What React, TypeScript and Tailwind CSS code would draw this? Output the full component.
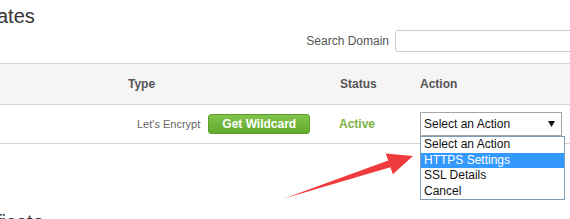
import React from "react";

const options = ["Select an Action", "HTTPS Settings", "SSL Details", "Cancel"];

const ActionSelect: React.FC = () => {
  return (
    <div className="relative w-[142px]">
      <div className="h-[24px] border border-[#a5a5a5] bg-white flex items-center justify-between pl-[3px] pr-[6px] text-[12px] text-[#111]">
        <span>Select an Action</span>
        <svg width="7" height="6" viewBox="0 0 7 6">
          <polygon points="0,0 7,0 3.5,6" fill="#111" />
        </svg>
      </div>
      {/* open option list */}
      <div className="absolute left-0 top-full w-[145px] border border-[#7f9db9] bg-white text-[12px] text-[#111]">
        {options.map((o, i) => (
          <div
            key={o}
            className={
              i === 1
                ? "h-[15.5px] leading-[15.5px] pl-[3px] bg-[#3399ff] text-white"
                : "h-[15.5px] leading-[15.5px] pl-[3px]"
            }
          >
            {o}
          </div>
        ))}
      </div>
    </div>
  );
};

export default function App() {
  return (
    <div className="relative w-[570px] h-[219px] overflow-hidden bg-white font-['Liberation_Sans',Arial,sans-serif] text-[#333]">
      <h2 className="text-[20px] leading-[24px] pt-[4px] -ml-[3px]">ates</h2>

      <div className="flex justify-end items-center mt-[2px] h-[22px]">
        <label className="text-[12px] text-[#555] mr-[6px]">Search Domain</label>
        <input className="w-[190px] h-[22px] border border-[#ccc] rounded-[3px] -mr-[15px] bg-white" />
      </div>

      <div className="mt-[11px]">
        <div className="grid grid-cols-[128px_212px_80px_1fr] items-center h-[42px] bg-[#f5f5f5] border-y border-[#d4d4d4] text-[12px] font-bold text-[#555]">
          <div />
          <div>Type</div>
          <div>Status</div>
          <div>Action</div>
        </div>
        <div className="grid grid-cols-[128px_212px_80px_1fr] items-center h-[39px] border-b border-[#d4d4d4]">
          <div />
          <div className="flex items-center pl-[9px] gap-[8px]">
            <span className="text-[11px] text-[#666]">Let's Encrypt</span>
            <button className="h-[20px] w-[102px] rounded-[3px] border border-[#5b9e2c] bg-gradient-to-b from-[#82c44b] to-[#62aa2f] text-white text-[12px] font-bold leading-none">
              Get Wildcard
            </button>
          </div>
          <div className="text-[12px] font-bold text-[#7cb342] -ml-[1px]">Active</div>
          <div>
            <ActionSelect />
          </div>
        </div>
      </div>

      <h2 className="text-[20px] leading-[24px] mt-[66px] -ml-[4px]">ficate</h2>

      {/* annotation arrow */}
      <svg className="absolute left-0 top-0 pointer-events-none" width="570" height="219" viewBox="0 0 570 219">
        <polygon
          points="284,198.5 388.2,160.6 385.8,153.5 413,156 392.8,174.3 390.4,167.2"
          fill="#ef3b3b"
        />
      </svg>
    </div>
  );
}
